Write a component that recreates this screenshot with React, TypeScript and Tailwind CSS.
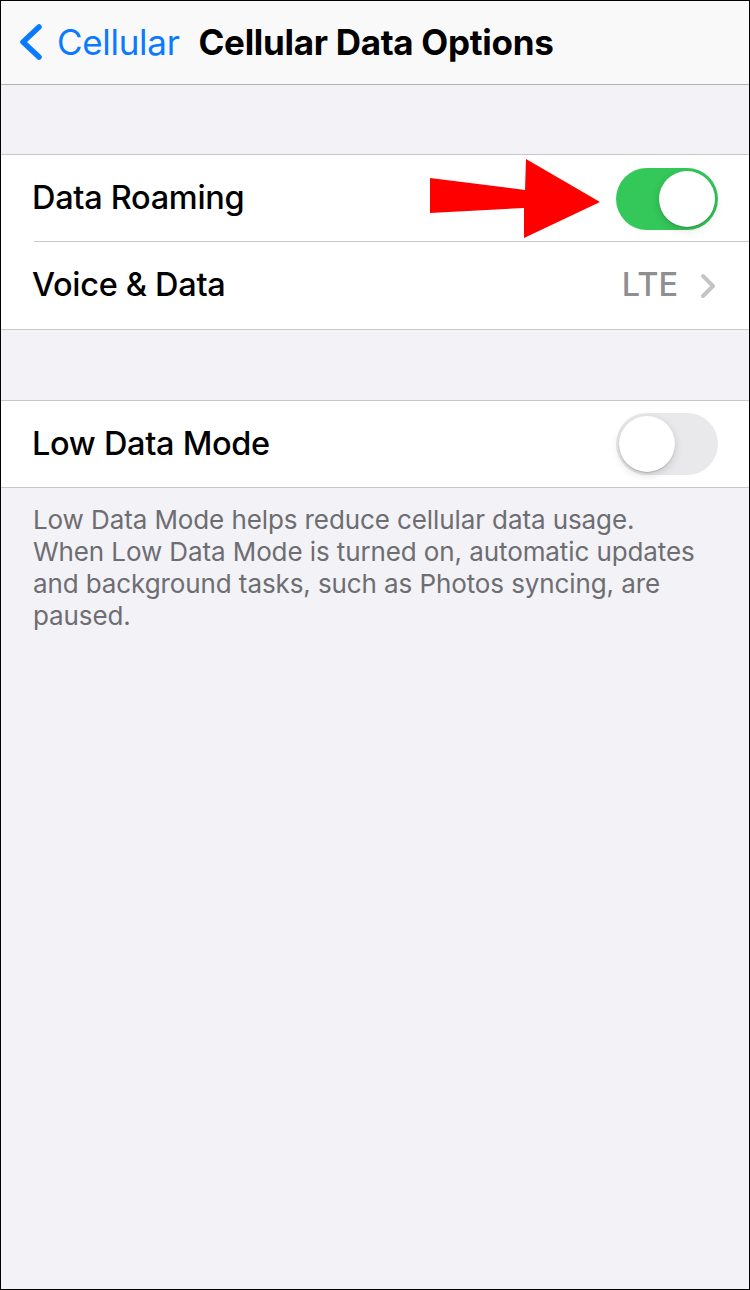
import React from "react";

function Toggle({ on }: { on: boolean }) {
  return (
    <div
      className={`relative w-[102px] h-[62px] rounded-full shrink-0 ${on ? "bg-[#34c759]" : "bg-[#e9e9eb]"}`}
    >
      <div
        className={`absolute top-[3px] w-[56px] h-[56px] rounded-full bg-white shadow-[0_3px_8px_rgba(0,0,0,0.15),0_1px_1px_rgba(0,0,0,0.16)] ${on ? "left-[43px]" : "left-[3px]"}`}
      />
    </div>
  );
}

export default function App() {
  return (
    <div
      className="w-[750px] h-[1290px] bg-[#f2f2f7] border border-black flex flex-col overflow-hidden"
      style={{ fontFamily: "Inter, 'Liberation Sans', sans-serif" }}
    >
      {/* nav bar */}
      <div className="h-[84px] shrink-0 bg-[#f9f9f9] border-b border-[#b1b1b4] flex items-center pl-[17px]">
        <svg width="26" height="36" viewBox="0 0 26 36" className="mb-[2px]">
          <path d="M21 3 L5 18 L21 33" fill="none" stroke="#0a7aff" strokeWidth="5.5" strokeLinecap="round" strokeLinejoin="round" />
        </svg>
        <span className="ml-[13px] text-[35px] text-[#0a7aff] tracking-[-0.3px]">Cellular</span>
        <span className="ml-[19px] text-[35px] font-bold text-black tracking-[-0.3px]">Cellular Data Options</span>
      </div>

      <div className="h-[69px] shrink-0" />

      {/* group 1 */}
      <div className="bg-white border-y border-[#c8c7cc]">
        <div className="relative h-[87px] flex items-center pl-[31px] pr-[31px]">
          <span className="flex-1 text-[32.5px] font-medium text-black tracking-[-0.3px]">Data Roaming</span>
          <Toggle on />
          <svg className="absolute left-[428px] top-[2px]" width="174" height="84" viewBox="428 156 174 84">
            <polygon points="429,177 524,189 525,158 599,201 523,237 523,207 429,212" fill="#ff0000" />
          </svg>
          <div className="absolute left-[33px] right-0 bottom-0 h-px bg-[#c8c7cc]" />
        </div>
        <div className="h-[87px] flex items-center pl-[31px] pr-[33px]">
          <span className="flex-1 text-[32.5px] font-medium text-black tracking-[-0.3px]">Voice &amp; Data</span>
          <span className="text-[32.5px] font-medium text-[#8e8e93] mr-[22px]">LTE</span>
          <svg width="16" height="26" viewBox="0 0 16 26">
            <path d="M3 3 L13 13 L3 23" fill="none" stroke="#c4c4c7" strokeWidth="4" strokeLinecap="round" strokeLinejoin="round" />
          </svg>
        </div>
      </div>

      <div className="h-[70px] shrink-0" />

      {/* group 2 */}
      <div className="bg-white border-y border-[#c8c7cc]">
        <div className="h-[86px] flex items-center pl-[31px] pr-[31px]">
          <span className="flex-1 text-[32.5px] font-medium text-black tracking-[-0.3px]">Low Data Mode</span>
          <Toggle on={false} />
        </div>
      </div>

      <p className="pl-[32px] pr-[20px] pt-[16px] text-[26px] leading-[32px] text-[#6d6d72] tracking-[-0.1px]">
        Low Data Mode helps reduce cellular data usage.
        <br />
        When Low Data Mode is turned on, automatic updates and background tasks, such as Photos syncing, are paused.
      </p>
    </div>
  );
}
